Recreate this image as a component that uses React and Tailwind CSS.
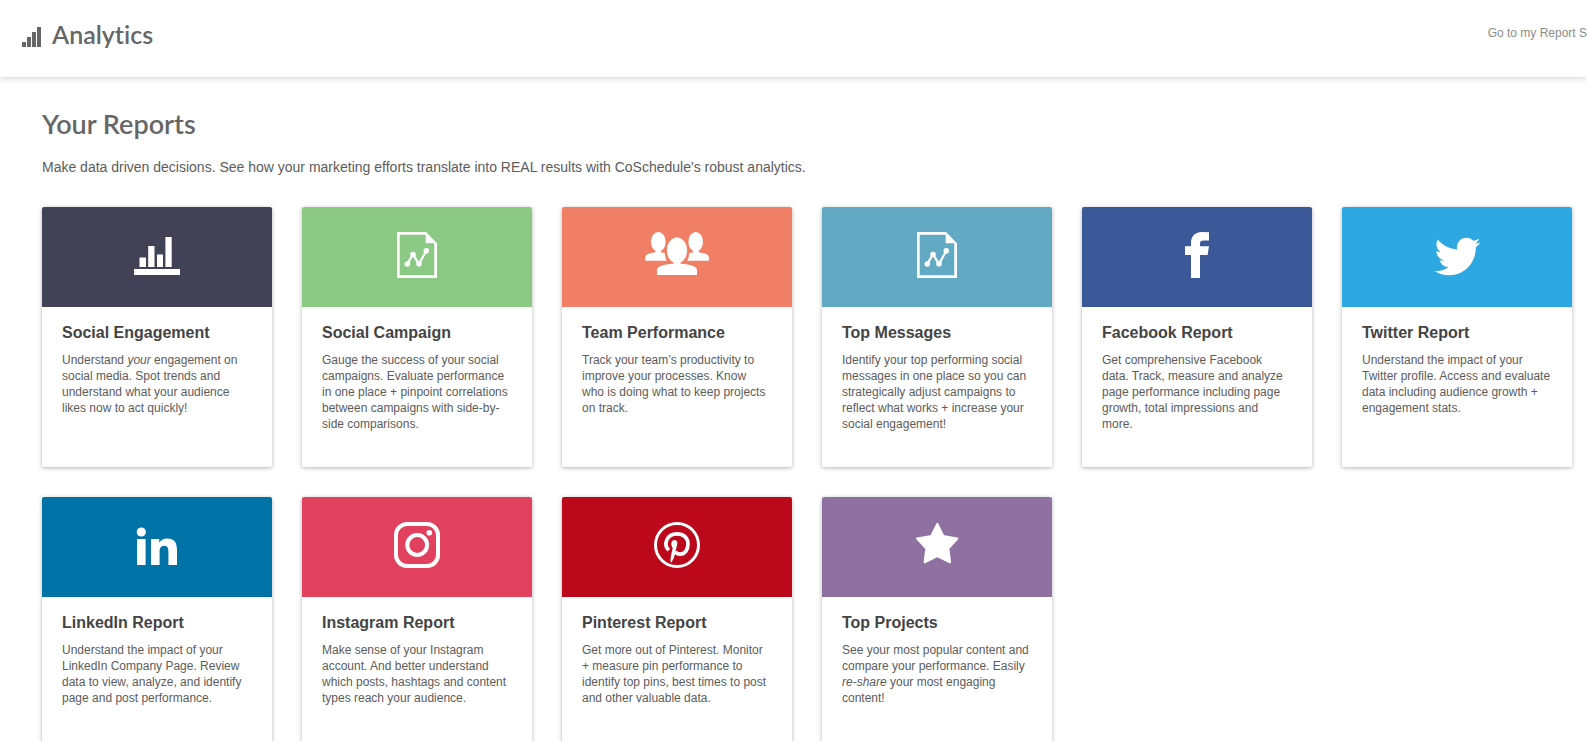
import { FaTwitter } from 'react-icons/fa';

const Icon = ({ wide, children }) => (
  <svg
    viewBox={wide ? '0 0 64 46' : '0 0 46 46'}
    className={wide ? 'w-16 h-[46px]' : 'w-[46px] h-[46px]'}
    fill="currentColor"
    aria-hidden="true"
  >
    {children}
  </svg>
);

const BarsIcon = () => (
  <Icon>
    <path d="M5.5 25.500H12V35H5.500zM14.200 14h6.300v21h-6.300zM23 22.500h6V35h-6zM31.400 5h6.300v30h-6.300zM0 37h46v6H0z" />
  </Icon>
);

const DocIcon = () => (
  <Icon>
    <path fillRule="evenodd" d="M3 0h29l11 11.3V46H3zM5.700 2.700v40.600h34.600v-32H31.700V2.700z" />
    <path d="M13.300 32 19 22.300 25 32l7.300-13.300" fill="none" stroke="currentColor" strokeWidth="2.200" />
    <circle cx="13.300" cy="32" r="2.800" />
    <circle cx="19" cy="22.500" r="2.800" />
    <circle cx="25" cy="31.800" r="2.800" />
    <circle cx="32.300" cy="18.700" r="2.800" />
  </Icon>
);

const TeamIcon = () => (
  <Icon wide>
    <ellipse cx="13.300" cy="9.800" rx="7.300" ry="9.800" />
    <ellipse cx="50.700" cy="9.800" rx="7.300" ry="9.800" />
    <path d="M.3 28.700v-3.500c0-2.800 4.500-4.200 9.200-4.700l1.500-2h4l1.500 2c1.200.1 2.300.3 3.200.6.300 3 .9 5.300 2 7.600z" />
    <path d="M63.900 28.700v-3.500c0-2.800-4.500-4.200-9.400-4.700l-1.500-2h-4l-1.500 2c-1.200.1-2.300.3-3.200.6-.3 3-.9 5.300-2 7.600z" />
    <ellipse cx="32" cy="18.400" rx="10.100" ry="13" />
    <path d="M12 43v-5c0-3.800 7-5.700 15.700-6.300 1.200-.2 1.500-1.200 1.500-2.700h5.600c0 1.500.3 2.500 1.500 2.700C45 32.300 52 34.200 52 38v5z" />
  </Icon>
);

const FacebookIcon = () => (
  <Icon>
    <path d="M35 .2v8.300h-5.300c-2.700 0-3.700.9-3.700 3v2.800h9L33.600 23H26v23h-9V23h-6v-8.700h6V11C17 4.200 21.300 0 27.800 0z" />
  </Icon>
);

const TwitterIcon = () => (
  <Icon>
    <FaTwitter x="0.500" y="1.500" size={46} />
  </Icon>
);

const LinkedinIcon = () => (
  <Icon>
    <circle cx="7.300" cy="10" r="4.600" />
    <path d="M3 17h8.600v26H3zM17 17h8.200v3.500c1.400-2.400 4.200-4.100 8-4.100 7.700 0 9.800 4.800 9.800 12.300V43h-8.600V30.300c0-3.300-.4-6.600-4.200-6.600s-4.600 3.100-4.600 6.400V43H17z" />
  </Icon>
);

const InstagramIcon = () => (
  <Icon>
    <rect x="2" y="2" width="42" height="42" rx="11" fill="none" stroke="currentColor" strokeWidth="4" />
    <circle cx="23.200" cy="23" r="9.900" fill="none" stroke="currentColor" strokeWidth="4" />
    <circle cx="35.300" cy="10.700" r="2.800" />
  </Icon>
);

const PinterestIcon = () => (
  <Icon>
    <circle cx="23" cy="23" r="21.500" fill="none" stroke="currentColor" strokeWidth="3" />
    <path
      d="M14.800 28.300C9 22.500 12.500 11.900 23 11.900c6.500 0 11 4 11 10.100 0 6-3.400 10.200-7.800 10.200-2.700 0-4.200-1.300-4.700-3"
      fill="none"
      stroke="currentColor"
      strokeWidth="3.700"
    />
    <path d="M17.300 21.500c.3-4.800 6.600-4.500 6 .3-.4 2.800-1.400 5.600-1.900 8.200-.8 4.300-1.900 8-4.500 11-.9-3.700 0-7.300.8-10.600l1-4.400c-.8-1.200-1.500-2.700-1.400-4.500z" />
  </Icon>
);

const StarIcon = () => (
  <Icon>
    <path
      d="M23.300 1.900 29.200 14 43.300 16.500 34.200 26.500 36 40.200 23.300 34 10.700 40.200 12.400 26.500 3.200 16.500 17.400 14z"
      stroke="currentColor"
      strokeWidth="2.200"
      strokeLinejoin="round"
    />
  </Icon>
);

const reports = [
  {
    title: 'Social Engagement',
    color: 'bg-[#414256]',
    icon: BarsIcon,
    text: <>Understand <em>your</em> engagement on social media. Spot trends and understand what your audience likes now to act quickly!</>,
  },
  {
    title: 'Social Campaign',
    color: 'bg-[#8bc985]',
    icon: DocIcon,
    text: 'Gauge the success of your social campaigns. Evaluate performance in one place + pinpoint correlations between campaigns with side-by-side comparisons.',
  },
  {
    title: 'Team Performance',
    color: 'bg-[#f07f65]',
    icon: TeamIcon,
    text: 'Track your team’s productivity to improve your processes. Know who\u00a0is doing what to keep projects on\u00a0track.',
  },
  {
    title: 'Top Messages',
    color: 'bg-[#62aac4]',
    icon: DocIcon,
    text: 'Identify your top performing social messages in one place so you can strategically adjust campaigns to reflect what works + increase your social engagement!',
  },
  {
    title: 'Facebook Report',
    color: 'bg-[#3b5998]',
    icon: FacebookIcon,
    text: 'Get comprehensive Facebook data. Track, measure and analyze page performance including page growth, total impressions and more.',
  },
  {
    title: 'Twitter Report',
    color: 'bg-[#2da8e2]',
    icon: TwitterIcon,
    text: 'Understand the impact of your Twitter profile. Access and evaluate data including audience growth + engagement stats.',
  },
  {
    title: 'LinkedIn Report',
    color: 'bg-[#0073a6]',
    icon: LinkedinIcon,
    text: 'Understand the impact of your LinkedIn Company Page. Review data to view, analyze, and identify page and post performance.',
  },
  {
    title: 'Instagram Report',
    color: 'bg-[#e1405f]',
    icon: InstagramIcon,
    text: 'Make sense of your Instagram account. And better understand which posts, hashtags and content types reach your audience.',
  },
  {
    title: 'Pinterest Report',
    color: 'bg-[#bb081a]',
    icon: PinterestIcon,
    text: 'Get more out of Pinterest. Monitor + measure pin performance to identify top pins, best times to post and other valuable data.',
  },
  {
    title: 'Top Projects',
    color: 'bg-[#8e70a1]',
    icon: StarIcon,
    text: <>See your most popular content and compare your performance. Easily <em>re-share</em> your most engaging content!</>,
  },
];

const ReportCard = ({ report }) => {
  const ReportIcon = report.icon;

  return (
    <a
      href="#"
      className="flex flex-col bg-white rounded-xs overflow-hidden shadow-[0_1px_4px_rgba(0,0,0,0.3)]"
    >
      <div className={`h-[100px] pb-1 flex items-center justify-center text-white ${report.color}`}>
        <ReportIcon />
      </div>
      <div className="min-h-40 px-5 pt-4 pb-5">
        <h3 className="text-base leading-5 font-bold text-[#444]">{report.title}</h3>
        <p className="mt-[9px] text-xs leading-4 text-[#5c5c5c]">{report.text}</p>
      </div>
    </a>
  );
};

const App = () => (
  <div className="min-h-screen bg-white font-['Liberation_Sans',Arial,sans-serif]">
    {/* Header */}
    <header className="h-[77px] pl-[22px] flex items-start justify-between shadow-[0_1px_7px_rgba(0,0,0,0.18)]">
      <div className="pt-5 flex items-center gap-[11px] text-[#666]">
        <svg viewBox="0 0 19 20" className="mt-[6px] w-[19px] h-5" fill="currentColor" aria-hidden="true">
          <path d="M0 15h4v5H0zM5 10h4v10H5zM10 5h4v15h-4zM15 0h4v20h-4z" />
        </svg>
        <h1 className="font-[Lato,sans-serif] text-[25px] leading-7 font-semibold [font-variant-ligatures:none]">Analytics</h1>
      </div>
      <a href="#" className="pt-6 text-xs leading-[18px] whitespace-nowrap text-[#8c8c8c]">
        Go to my Report S
      </a>
    </header>

    {/* Reports */}
    <main className="pl-[42px] pr-[15px] pt-8 pb-8">
      <h2 className="font-[Lato,sans-serif] text-[27px] leading-[30px] font-semibold text-[#666]">Your Reports</h2>
      <p className="mt-[18px] text-sm leading-5 text-[#5c5c5c]">
        Make data driven decisions. See how your marketing efforts translate into REAL results with CoSchedule's robust analytics.
      </p>
      <div className="mt-[30px] grid grid-cols-[repeat(auto-fill,minmax(220px,1fr))] gap-[30px]">
        {reports.map((report) => (
          <ReportCard key={report.title} report={report} />
        ))}
      </div>
    </main>
  </div>
);

export default App;
